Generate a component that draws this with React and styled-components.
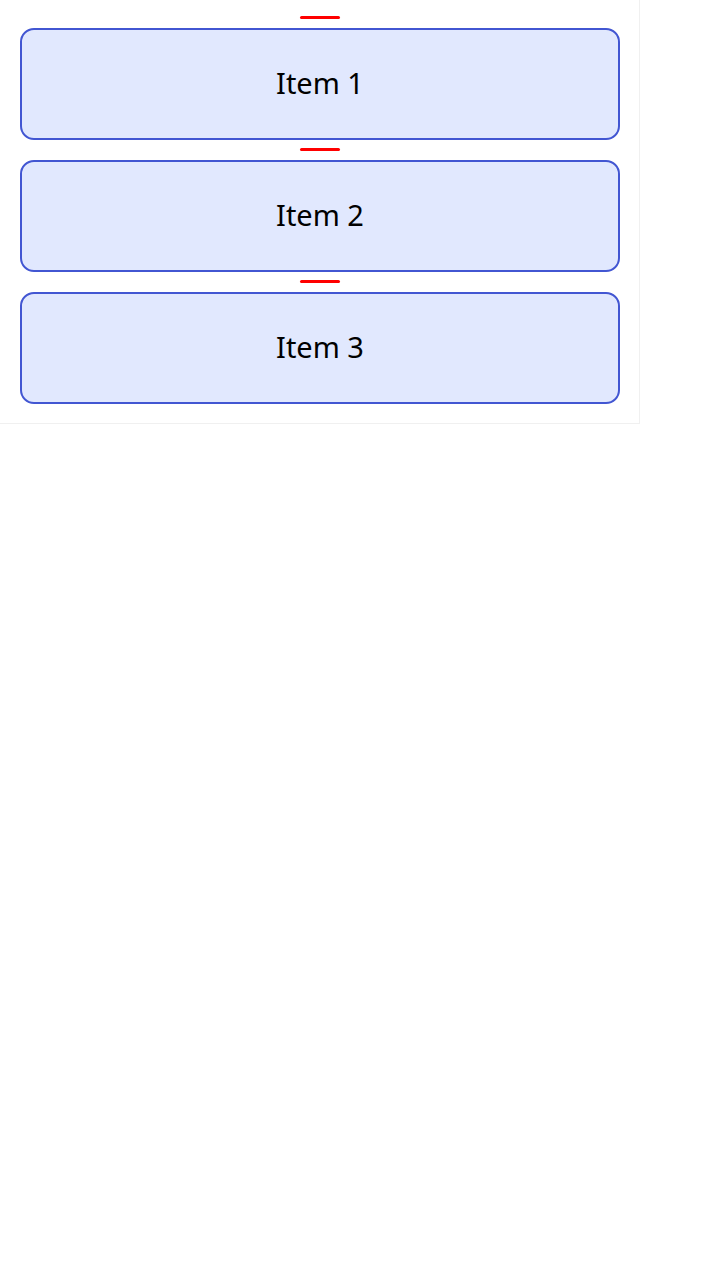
import React from "react";
import styled, { createGlobalStyle } from "styled-components";

const Global = createGlobalStyle`
  html, body { margin: 0; padding: 0; background: transparent; }
  body { font-family: "Noto Sans", "Open Sans", sans-serif; }
`;

const Container = styled.div`
  width: 640px;
  box-sizing: border-box;
  padding: 16px 19px 19px 20px;
  display: flex;
  flex-direction: column;
  gap: 8px;
  border-right: 1px solid rgba(0, 0, 0, 0.06);
  border-bottom: 1px solid rgba(0, 0, 0, 0.06);
`;

const Item = styled.div`
  display: flex;
  flex-direction: column;
  align-items: center;
`;

const Indicator = styled.div`
  width: 40px;
  height: 3px;
  border-radius: 2px;
  background: #ff0000;
  margin-bottom: 9px;
`;

const Card = styled.div`
  width: 100%;
  height: 112px;
  box-sizing: border-box;
  border: 2px solid #4256d2;
  border-radius: 14px;
  background: #e1e8fe;
  display: flex;
  align-items: center;
  justify-content: center;
  padding-bottom: 3px;
  font-size: 29px;
  color: #000;
`;

export default function App() {
  const items = ["Item 1", "Item 2", "Item 3"];
  return (
    <>
      <Global />
      <Container>
        {items.map((t) => (
          <Item key={t}>
            <Indicator />
            <Card>{t}</Card>
          </Item>
        ))}
      </Container>
    </>
  );
}
